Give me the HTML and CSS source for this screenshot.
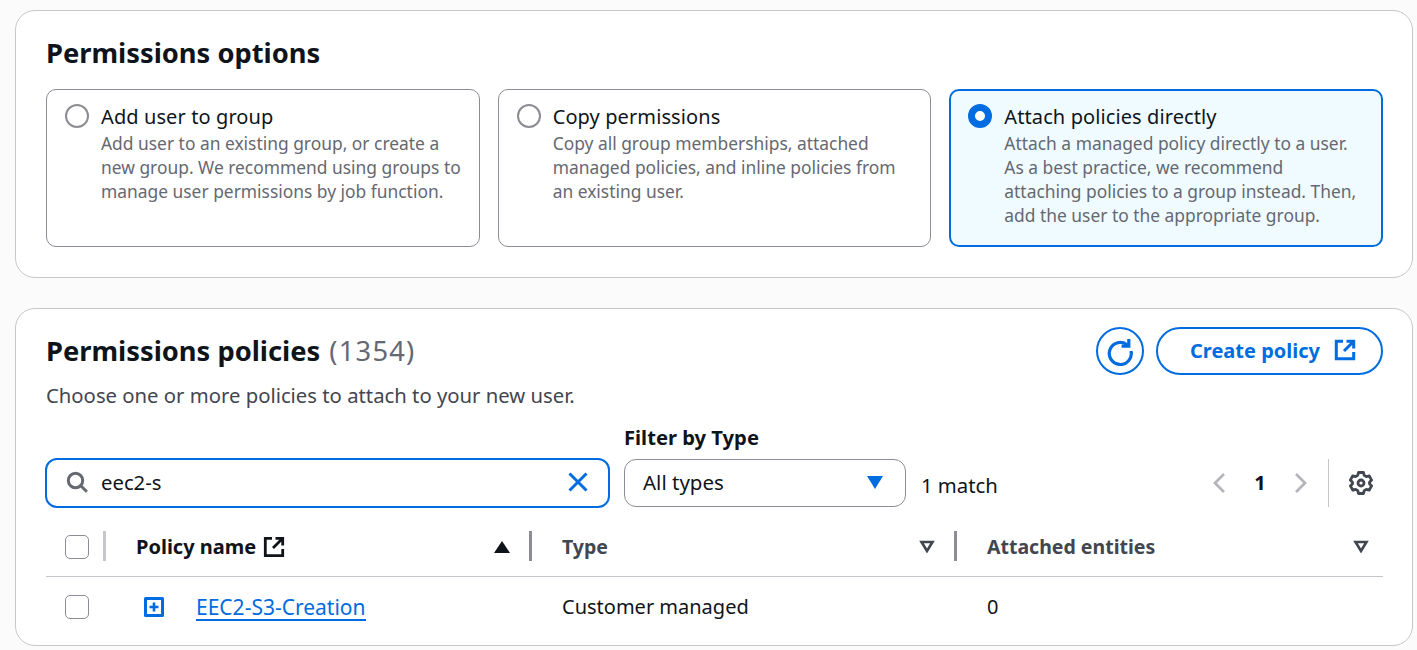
FILE: index.html
```html
<!DOCTYPE html>
<html lang="en">
<head>
  <meta charset="UTF-8">
  <title>Set permissions</title>
  <link rel="stylesheet" href="styles.css">
</head>
<body>
  <section class="card options-card">
    <h2 class="card-title">Permissions options</h2>
    <div class="options">
      <div class="option">
        <span class="radio"></span>
        <div>
          <div class="option-title">Add user to group</div>
          <div class="option-desc">Add user to an existing group, or create a new group. We recommend using groups to manage user permissions by job function.</div>
        </div>
      </div>
      <div class="option">
        <span class="radio"></span>
        <div>
          <div class="option-title">Copy permissions</div>
          <div class="option-desc">Copy all group memberships, attached managed policies, and inline policies from an existing user.</div>
        </div>
      </div>
      <div class="option selected">
        <span class="radio checked"></span>
        <div>
          <div class="option-title">Attach policies directly</div>
          <div class="option-desc">Attach a managed policy directly to a user. As a best practice, we recommend attaching policies to a group instead. Then, add the user to the appropriate group.</div>
        </div>
      </div>
    </div>
  </section>

  <section class="card policies-card">
    <div class="policies-head">
      <div class="head-text">
        <h2 class="card-title">Permissions policies <span class="count">(1354)</span></h2>
        <p class="subtitle">Choose one or more policies to attach to your new user.</p>
      </div>
      <div class="head-actions">
        <button class="btn-icon">
          <svg width="30" height="30" viewBox="0 0 30 30" fill="none" stroke="#006ce0" stroke-width="3.2"><path d="M22.5 9.2A11 11 0 1 0 26 15"/><path d="M23.8 3v7.200h-7.200"/></svg>
        </button>
        <button class="btn-pill">Create policy
          <svg class="ext" width="22" height="22" viewBox="0 0 22 22" fill="none" stroke="#006ce0" stroke-width="3"><path d="M9 2.300H2.300v17.400h17.400V13"/><path d="M12.500 2.300h7.200v7.200M19.500 2.500 10 12"/></svg>
        </button>
      </div>
    </div>

    <div class="filters">
      <div class="search">
        <svg width="24" height="24" viewBox="0 0 24 24" fill="none" stroke="#656871" stroke-width="3"><circle cx="10.500" cy="10.500" r="7.200"/><path d="m15.800 15.800 6 6"/></svg>
        <span class="search-text">eec2-s</span>
        <svg class="clear" width="24" height="24" viewBox="0 0 24 24" fill="none" stroke="#006ce0" stroke-width="3"><path d="m3.500 3.500 17 17M20.500 3.500l-17 17"/></svg>
      </div>
      <div class="type-filter">
        <div class="filter-label">Filter by Type</div>
        <div class="select">All types <span class="caret"></span></div>
      </div>
      <span class="matches">1 match</span>
      <div class="pager">
        <svg width="16" height="22" viewBox="0 0 16 22" fill="none" stroke="#b4b4bb" stroke-width="2.800"><path d="M13 2 4 11l9 9"/></svg>
        <span class="page-num">1</span>
        <svg width="16" height="22" viewBox="0 0 16 22" fill="none" stroke="#b4b4bb" stroke-width="2.800"><path d="m3 2 9 9-9 9"/></svg>
      </div>
      <div class="settings">
        <svg width="24" height="24" viewBox="0 0 24 24" fill="none" stroke="#424650" stroke-width="2.800" stroke-linejoin="round"><path d="M9.500 1.500h5l.7 2.900 2.100 1.200 2.800-.8 2.500 4.300-2.100 2.100v1.600l2.100 2.100-2.500 4.300-2.800-.8-2.100 1.200-.7 2.900h-5l-.7-2.900-2.100-1.200-2.800.8-2.500-4.300 2.100-2.100v-1.600L1.300 9.100l2.500-4.300 2.800.8 2.100-1.200z"/><circle cx="12" cy="12" r="3"/></svg>
      </div>
    </div>

    <table class="policies">
      <colgroup>
        <col class="col-check"><col class="col-name"><col class="col-type"><col class="col-entities">
      </colgroup>
      <thead>
        <tr>
          <th><span class="box"></span><span class="divider light"></span></th>
          <th>
            <div class="th-inner dark">
              <span class="th-label">Policy name
                <svg width="22" height="22" viewBox="0 0 22 22" fill="none" stroke="#0f141a" stroke-width="2.800"><path d="M9 2.300H2.300v17.400h17.400V13"/><path d="M12.500 2.300h7.200v7.200M19.500 2.500 10 12"/></svg>
              </span>
              <span class="sort-up"></span>
            </div>
            <span class="divider"></span>
          </th>
          <th>
            <div class="th-inner">
              <span class="th-label">Type</span>
              <svg class="sort" width="16" height="13" viewBox="0 0 16 13" fill="none" stroke="#424650" stroke-width="2.600"><path d="M2.500 2h11L8 11z"/></svg>
            </div>
            <span class="divider"></span>
          </th>
          <th>
            <div class="th-inner last">
              <span class="th-label">Attached entities</span>
              <svg class="sort" width="16" height="13" viewBox="0 0 16 13" fill="none" stroke="#424650" stroke-width="2.600"><path d="M2.500 2h11L8 11z"/></svg>
            </div>
          </th>
        </tr>
      </thead>
      <tbody>
        <tr>
          <td><span class="box"></span></td>
          <td>
            <div class="name-cell">
              <svg width="22" height="22" viewBox="0 0 22 22"><rect x="1" y="1" width="20" height="20" rx="1.500" fill="#006ce0"/><rect x="4" y="4" width="14" height="14" fill="#fff"/><path fill="#006ce0" d="M9.700 6.500h2.600v3.200h3.200v2.600h-3.200v3.200H9.700v-3.200H6.500V9.700h3.200z"/></svg>
              <a class="policy-link" href="#">EEC2-S3-Creation</a>
            </div>
          </td>
          <td>Customer managed</td>
          <td>0</td>
        </tr>
      </tbody>
    </table>
  </section>
</body>
</html>
```

FILE: styles.css
```css
* {
  box-sizing: border-box;
}

html, body {
  height: 650px;
  overflow: hidden;
}

body {
  margin: 0;
  padding: 10px 4px 0 15px;
  background: #fbfbfb;
  font-family: "Noto Sans", Arial, sans-serif;
  font-size: 20px;
  line-height: 24px;
  color: #0f141a;
}

.card {
  background: #fff;
  border: 1px solid #c6c6cd;
  border-radius: 20px;
  padding: 0 29px 0 30px;
}

.options-card {
  height: 268px;
  padding-top: 24px;
}

.policies-card {
  height: 338px;
  margin-top: 30px;
  padding-top: 18px;
}

.card-title {
  margin: 0;
  font-size: 27.300px;
  line-height: 36px;
  font-weight: 700;
}

.count {
  margin-left: 2px;
  font-weight: 400;
  letter-spacing: 1.200px;
  color: #656871;
}

/* Permission option tiles */
.options {
  display: grid;
  grid-template-columns: repeat(3, 1fr);
  gap: 18px;
  margin-top: 18px;
}

.option {
  display: flex;
  gap: 12px;
  height: 158px;
  padding: 14px 12px 14px 18px;
  border: 1px solid #8c8c94;
  border-radius: 10px;
}

.option.selected {
  background: #f0fbff;
  border: 2px solid #006ce0;
  padding: 13px 11px 13px 17px;
}

.radio {
  flex: none;
  width: 24px;
  height: 24px;
  border: 2px solid #8c8c94;
  border-radius: 50%;
  background: #fff;
}

.radio.checked {
  border: 7px solid #006ce0;
}

.option-title {
  margin-bottom: 1px;
  font-size: 20px;
  line-height: 26px;
  letter-spacing: 0.100px;
}

.option-desc {
  width: 362px;
  font-size: 17.400px;
  line-height: 24px;
  color: #656871;
}

.selected .option-desc {
  width: 358px;
}

/* Policies header */
.policies-head {
  display: flex;
  justify-content: space-between;
}

.head-text {
  padding-top: 6px;
}

.subtitle {
  margin: 14px 0 0;
  font-size: 20.300px;
  color: #424650;
}

.head-actions {
  display: flex;
  gap: 12px;
}

.btn-icon {
  width: 48px;
  height: 48px;
  padding: 0;
  display: flex;
  align-items: center;
  justify-content: center;
  background: #fff;
  border: 2.500px solid #006ce0;
  border-radius: 50%;
}

.btn-pill {
  display: flex;
  align-items: center;
  justify-content: center;
  gap: 14px;
  width: 227px;
  height: 48px;
  padding: 0 0 2px 7px;
  background: #fff;
  border: 2.500px solid #006ce0;
  border-radius: 24px;
  color: #006ce0;
  font-family: inherit;
  font-size: 20px;
  font-weight: 700;
}

/* Filter row */
.filters {
  display: flex;
  align-items: flex-end;
  margin-top: 18px;
}

.search {
  display: flex;
  align-items: center;
  width: 565px;
  height: 50px;
  margin: 0 0 -1px -1px;
  padding: 0 18px 2px;
  border: 2.500px solid #006ce0;
  border-radius: 12px;
  font-size: 20.300px;
}

.search-text {
  flex: 1;
  margin-left: 12px;
}

.type-filter {
  margin-left: 14px;
  width: 282px;
}

.filter-label {
  font-size: 20.200px;
  font-weight: 700;
  line-height: 24px;
  margin-bottom: 10px;
}

.select {
  display: flex;
  align-items: center;
  justify-content: space-between;
  height: 48px;
  padding: 0 22px 2px 18px;
  border: 1px solid #8c8c94;
  border-radius: 12px;
  font-size: 20.500px;
}

.caret {
  width: 0;
  height: 0;
  border-left: 8px solid transparent;
  border-right: 8px solid transparent;
  border-top: 13px solid #006ce0;
}

.matches {
  margin-left: 15px;
  font-size: 20.300px;
  line-height: 44px;
}

.pager {
  display: flex;
  align-items: center;
  margin-left: auto;
  height: 48px;
  font-weight: 700;
}

.page-num {
  width: 66px;
  text-align: center;
  font-size: 20px;
}

.settings {
  display: flex;
  align-items: center;
  margin: 0 10px 0 19px;
  padding-left: 20px;
  height: 48px;
  border-left: 1px solid #c6c6cd;
}

/* Table */
.policies {
  width: 100%;
  margin-top: 11px;
  border-collapse: collapse;
  table-layout: fixed;
  font-size: 20px;
}

.col-check { width: 60px; }
.col-name { width: 426px; }
.col-type { width: 425px; }

.policies th {
  position: relative;
  height: 58px;
  padding: 0 0 0 30px;
  border-bottom: 1px solid #c6c6cd;
  text-align: left;
  font-size: 19.500px;
  font-weight: 700;
  color: #424650;
}

.policies th:first-child,
.policies td:first-child {
  padding-left: 19px;
}

.th-inner {
  display: flex;
  align-items: center;
  justify-content: space-between;
  padding-right: 22px;
}

.th-inner.dark {
  font-size: 20px;
  color: #0f141a;
}

.th-inner.last {
  padding-right: 14px;
}

.th-label {
  display: flex;
  align-items: center;
  gap: 7px;
}

.sort-up {
  width: 0;
  height: 0;
  border-left: 8px solid transparent;
  border-right: 8px solid transparent;
  border-bottom: 12px solid #0f141a;
}

.divider {
  position: absolute;
  right: 0;
  top: 13px;
  width: 3px;
  height: 30px;
  background: #8c8c94;
}

.divider.light {
  background: #c6c6cd;
}

.box {
  display: block;
  width: 24px;
  height: 24px;
  border: 1.500px solid #8c8c94;
  border-radius: 5px;
  background: #fff;
}

.policies td {
  height: 62px;
  padding: 0 0 0 30px;
}

.name-cell {
  display: flex;
  align-items: center;
  gap: 31px;
  padding-left: 7px;
}

.policy-link {
  padding-top: 2px;
  color: #006ce0;
  font-size: 21px;
  text-decoration: none;
  border-bottom: 2px solid #006ce0;
  line-height: 23px;
}
```
